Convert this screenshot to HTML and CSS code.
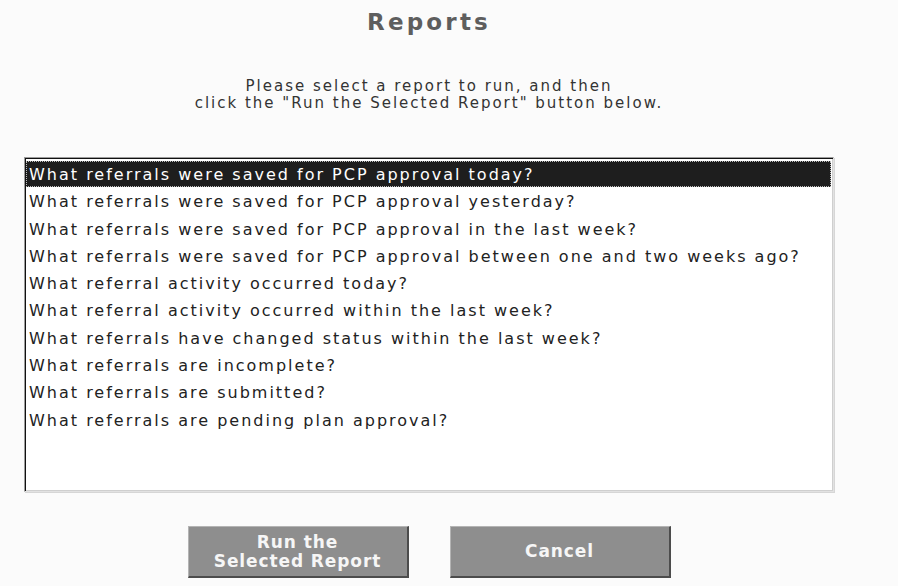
FILE: index.html
```html
<!DOCTYPE html>
<html lang="en">
<head>
<meta charset="utf-8">
<title>Reports</title>
<link rel="stylesheet" href="styles.css">
</head>
<body>
<main class="page">
  <h1 class="title">Reports</h1>
  <p class="intro">Please select a report to run, and then<br>click the "Run the Selected Report" button below.</p>

  <ul class="report-list" role="listbox" aria-label="Reports">
    <li class="report-item is-selected" role="option" aria-selected="true">What referrals were saved for PCP approval today?</li>
    <li class="report-item" role="option">What referrals were saved for PCP approval yesterday?</li>
    <li class="report-item" role="option">What referrals were saved for PCP approval in the last week?</li>
    <li class="report-item" role="option">What referrals were saved for PCP approval between one and two weeks ago?</li>
    <li class="report-item" role="option">What referral activity occurred today?</li>
    <li class="report-item" role="option">What referral activity occurred within the last week?</li>
    <li class="report-item" role="option">What referrals have changed status within the last week?</li>
    <li class="report-item" role="option">What referrals are incomplete?</li>
    <li class="report-item" role="option">What referrals are submitted?</li>
    <li class="report-item" role="option">What referrals are pending plan approval?</li>
  </ul>

  <div class="actions">
    <button class="btn btn-run" type="button">Run the<br>Selected Report</button>
    <button class="btn btn-cancel" type="button">Cancel</button>
  </div>
</main>
</body>
</html>
```

FILE: styles.css
```css
html, body {
  margin: 0;
  padding: 0;
  background: #fbfbfb;
}

body {
  font-family: "DejaVu Sans", "Liberation Sans", sans-serif;
  color: #2a2a2a;
}

.page {
  width: 810px;
  margin-left: 24px;
  padding-top: 8px;
}

.title {
  margin: 0;
  text-align: center;
  font-size: 23px;
  font-weight: bold;
  line-height: 28px;
  letter-spacing: 3.2px;
  color: #5e5e5e;
}

.intro {
  margin: 42px 0 0;
  text-align: center;
  font-size: 15px;
  line-height: 17px;
  letter-spacing: 2px;
  color: #333;
}

.report-list {
  list-style: none;
  margin: 45px 0 0;
  padding: 3px 2px 0 1px;
  height: 335px;
  box-sizing: border-box;
  background: #fff;
  border: 1px solid;
  border-color: #9c9c9c #e2e2e2 #e2e2e2 #9c9c9c;
  box-shadow: inset 1px 1px 0 #111, inset -1px -1px 0 #cfcfcf, 1px 1px 0 #d6d6d6;
}

.report-item {
  box-sizing: border-box;
  height: 27.3px;
  padding: 2px 0 0 3px;
  line-height: 24px;
  font-size: 16px;
  letter-spacing: 2px;
  white-space: nowrap;
  color: #222;
}

.report-item.is-selected {
  background: #1e1e1e;
  color: #fff;
  height: 26px;
  margin-bottom: 1.3px;
  outline: 1px dotted #bdbdbd;
  outline-offset: -1px;
}

.actions {
  display: flex;
  justify-content: center;
  gap: 41px;
  margin-top: 34px;
}

.btn {
  height: 52px;
  padding: 0;
  background: #8e8e8e;
  border-style: solid;
  border-width: 1px 2px 2px 1px;
  border-color: #b4b4b4 #4c4c4c #4c4c4c #b4b4b4;
  color: #f6f6f6;
  font-family: "DejaVu Sans", "Liberation Sans", sans-serif;
  font-size: 17px;
  font-weight: bold;
  line-height: 19px;
  letter-spacing: 0.9px;
}

.btn-run {
  width: 221px;
}

.btn-cancel {
  width: 221px;
}
```
